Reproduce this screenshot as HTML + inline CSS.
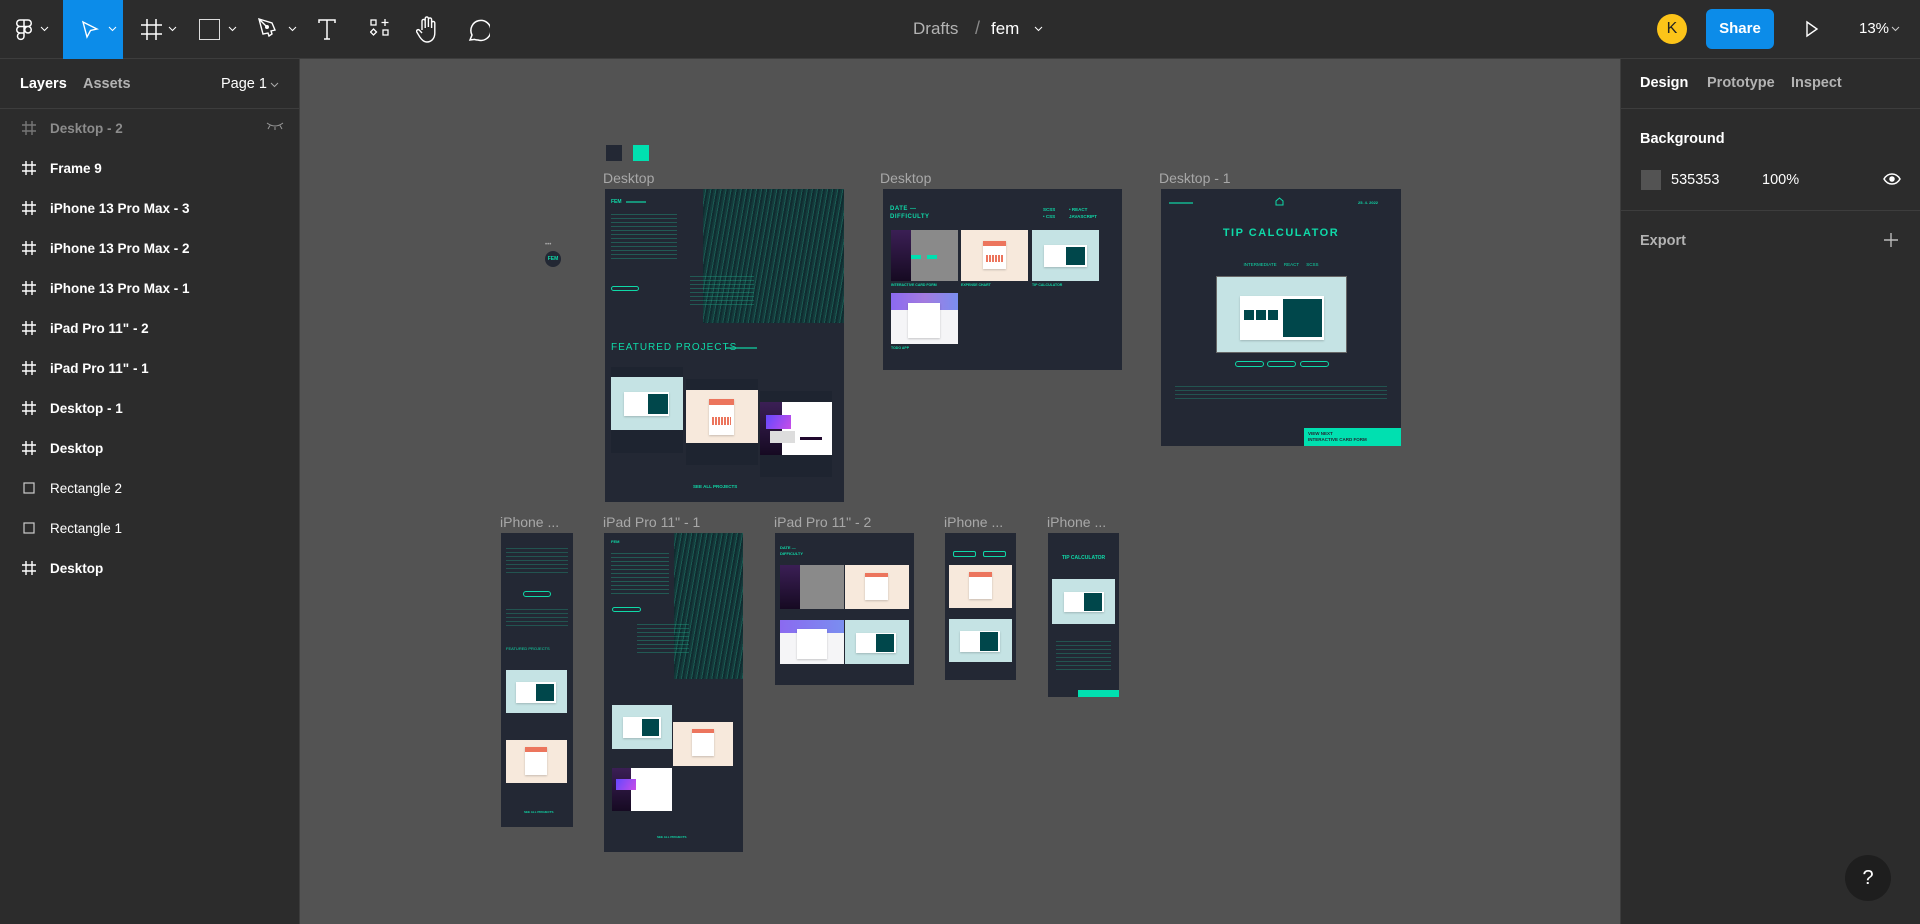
<!DOCTYPE html>
<html><head><meta charset="utf-8"><style>
*{margin:0;padding:0;box-sizing:border-box}
body{width:1920px;height:924px;overflow:hidden;background:#535353;font-family:"Liberation Sans",sans-serif;position:relative}
.a{position:absolute}
#top{left:0;top:0;width:1920px;height:59px;background:#2c2c2c;border-bottom:1px solid #3d3d3d}
#left{left:0;top:59px;width:300px;height:865px;background:#2c2c2c;border-right:1px solid #3d3d3d}
#right{left:1620px;top:59px;width:300px;height:865px;background:#2c2c2c;border-left:1px solid #3d3d3d}
.row{position:absolute;left:0;width:300px;height:40px;font-size:13.5px;font-weight:bold;color:#fff}
.row span{position:absolute;left:50px;top:12px}
.row svg{position:absolute;left:22px;top:12px}
.lbl{position:absolute;color:#a8a8a8;font-size:14px}
.fr{position:absolute;background:#232834;overflow:hidden}
.t{position:absolute;color:#0fd9a8;font-weight:bold;white-space:nowrap}
.ln{position:absolute;height:1.5px;background:#0fd9a8;opacity:.6}
.tx{position:absolute;background:repeating-linear-gradient(#1fa585 0 1px,transparent 1px 4px);opacity:.4}
.tex{position:absolute;background:repeating-linear-gradient(100deg,#143a3b 0 2px,#1a5a52 2px 3px,#102c30 3px 5px)}
.lb{background:#c5e3e4}.pe{background:#f7e9dc}
.card{position:absolute;background:#fff;box-shadow:0 1px 2px rgba(0,0,0,.2)}
</style></head><body>
<div id="top" class="a">
 <svg class="a" style="left:16px;top:19px" width="16" height="22" viewBox="0 0 16 22" fill="none" stroke="#fff" stroke-width="1.5"><path d="M4 1h4v6.5H4a3.25 3.25 0 010-6.5zM8 1h4a3.25 3.25 0 010 6.5H8zM4 7.5h4V14H4a3.25 3.25 0 010-6.5zM12 7.5a3.25 3.25 0 110 6.5 3.25 3.25 0 010-6.5zM4 14h4v3.3A3.25 3.25 0 114 14z"/></svg>
 <svg class="a" style="left:40px;top:26px" width="9" height="6" viewBox="0 0 9 6" fill="none" stroke="#fff"><path d="M1 1l3.5 3.5L8 1"/></svg>
 <div class="a" style="left:63px;top:0;width:60px;height:59px;background:#0c8ce9"></div>
 <svg class="a" style="left:81px;top:20px" width="18" height="19" viewBox="0 0 18 19" fill="none" stroke="#fff" stroke-width="1.4"><path d="M2 2l14 7-6.5 1.5L6 17z"/></svg>
 <svg class="a" style="left:108px;top:26px" width="9" height="6" viewBox="0 0 9 6" fill="none" stroke="#fff"><path d="M1 1l3.5 3.5L8 1"/></svg>
 <svg class="a" style="left:141px;top:19px" width="21" height="21" viewBox="0 0 21 21" fill="none" stroke="#fff" stroke-width="1.5"><path d="M6 0v21M15 0v21M0 6h21M0 15h21"/></svg>
 <svg class="a" style="left:168px;top:26px" width="9" height="6" viewBox="0 0 9 6" fill="none" stroke="#fff"><path d="M1 1l3.5 3.5L8 1"/></svg>
 <div class="a" style="left:199px;top:19px;width:21px;height:21px;border:1.5px solid #ddd"></div>
 <svg class="a" style="left:228px;top:26px" width="9" height="6" viewBox="0 0 9 6" fill="none" stroke="#fff"><path d="M1 1l3.5 3.5L8 1"/></svg>
 <svg class="a" style="left:258px;top:18px" width="22" height="22" viewBox="0 0 22 22" fill="none" stroke="#fff" stroke-width="1.4"><path d="M1 1l13 4 3 7-4 1 1 3-3 2-1-3-5 1zM1 1l7 7"/><circle cx="9" cy="9" r="1.3" fill="#fff"/></svg>
 <svg class="a" style="left:288px;top:26px" width="9" height="6" viewBox="0 0 9 6" fill="none" stroke="#fff"><path d="M1 1l3.5 3.5L8 1"/></svg>
 <svg class="a" style="left:318px;top:19px" width="18" height="21" viewBox="0 0 18 21" fill="none" stroke="#fff" stroke-width="1.5"><path d="M1 4V1h16v3M9 1v19M6 20h6"/></svg>
 <svg class="a" style="left:370px;top:19px" width="19" height="19" viewBox="0 0 19 19" fill="none" stroke="#fff" stroke-width="1.3"><rect x="1" y="1" width="5" height="5"/><path d="M15 0v7M11.5 3.5h7M3.5 10l3 3-3 3-3-3z"/><rect x="13" y="11" width="5" height="5"/></svg>
 <svg class="a" style="left:416px;top:16px" width="23" height="27" viewBox="0 0 23 27" fill="none" stroke="#fff" stroke-width="1.4"><path d="M6 14V5a1.6 1.6 0 013.2 0v7M9.2 11V2.5a1.6 1.6 0 013.2 0V11M12.4 11V3.5a1.6 1.6 0 013.2 0V12M15.6 12V7a1.6 1.6 0 013.2 0v10c0 5-3 9-8 9-3 0-5-2-7-5l-3-5a1.6 1.6 0 012.7-1.7L6 17"/></svg>
 <svg class="a" style="left:466px;top:18px" width="24" height="24" viewBox="0 0 24 24" fill="none" stroke="#fff" stroke-width="1.5"><path d="M4 22l2-5A10 10 0 1112 22a10 10 0 01-3.5-.6z"/></svg>
 <div class="a" style="left:913px;top:19px;font-size:17px;color:#b3b3b3">Drafts</div>
 <div class="a" style="left:975px;top:18px;font-size:18px;color:#8a8a8a">/</div>
 <div class="a" style="left:991px;top:19px;font-size:17px;color:#fff">fem</div>
 <svg class="a" style="left:1034px;top:26px" width="9" height="6" viewBox="0 0 9 6" fill="none" stroke="#fff"><path d="M1 1l3.5 3.5L8 1"/></svg>
 <div class="a" style="left:1657px;top:14px;width:30px;height:30px;border-radius:50%;background:#fcc419;color:#222;font-size:16px;text-align:center;line-height:30px">K</div>
 <div class="a" style="left:1706px;top:9px;width:68px;height:40px;border-radius:6px;background:#0c8ce9;color:#fff;font-weight:bold;font-size:15px;text-align:center;line-height:40px">Share</div>
 <svg class="a" style="left:1805px;top:20px" width="14" height="18" viewBox="0 0 14 18" fill="none" stroke="#fff" stroke-width="1.4"><path d="M2 2l10 7-10 7z"/></svg>
 <div class="a" style="left:1859px;top:20px;font-size:15px;color:#fff">13%</div>
 <svg class="a" style="left:1891px;top:26px" width="9" height="6" viewBox="0 0 9 6" fill="none" stroke="#ccc"><path d="M1 1l3.5 3.5L8 1"/></svg>
</div>

<div id="left" class="a">
 <div class="a" style="left:20px;top:17px;font-size:14.5px;font-weight:bold;color:#fff">Layers</div>
 <div class="a" style="left:83px;top:17px;font-size:14.5px;font-weight:bold;color:#b3b3b3">Assets</div>
 <div class="a" style="left:221px;top:17px;font-size:14.5px;color:#fff">Page 1</div>
 <svg class="a" style="left:270px;top:23px" width="9" height="6" viewBox="0 0 9 6" fill="none" stroke="#aaa"><path d="M1 1l3.5 3.5L8 1"/></svg>
 <div class="a" style="left:0;top:49px;width:300px;height:1px;background:#3d3d3d"></div>
</div>
<div id="right" class="a">
 <div class="a" style="left:19px;top:16px;font-size:14.5px;font-weight:bold;color:#fff">Design</div>
 <div class="a" style="left:86px;top:16px;font-size:14.5px;font-weight:bold;color:#b3b3b3">Prototype</div>
 <div class="a" style="left:170px;top:16px;font-size:14.5px;font-weight:bold;color:#b3b3b3">Inspect</div>
 <div class="a" style="left:0;top:49px;width:300px;height:1px;background:#3d3d3d"></div>
 <div class="a" style="left:19px;top:72px;font-size:14.5px;font-weight:bold;color:#fff">Background</div>
 <div class="a" style="left:20px;top:111px;width:20px;height:20px;background:#535353"></div>
 <div class="a" style="left:50px;top:113px;font-size:14.5px;color:#fff">535353</div>
 <div class="a" style="left:141px;top:113px;font-size:14.5px;color:#fff">100%</div>
 <svg class="a" style="left:262px;top:113px" width="18" height="14" viewBox="0 0 18 14" fill="none" stroke="#fff" stroke-width="1.5"><path d="M1 7c2-3.5 5-5 8-5s6 1.5 8 5c-2 3.5-5 5-8 5s-6-1.5-8-5z"/><circle cx="9" cy="7" r="2" fill="#fff"/></svg>
 <div class="a" style="left:0;top:151px;width:300px;height:1px;background:#3d3d3d"></div>
 <div class="a" style="left:19px;top:174px;font-size:14.5px;font-weight:bold;color:#b3b3b3">Export</div>
 <svg class="a" style="left:262px;top:173px" width="16" height="16" viewBox="0 0 16 16" stroke="#bbb" stroke-width="1.4"><path d="M8 1v14M1 8h14"/></svg>
 <div class="a" style="left:224px;top:796px;width:46px;height:46px;border-radius:50%;background:#1e1e1e;color:#fff;font-size:20px;text-align:center;line-height:46px">?</div>
</div>

<div class="a" style="top:109px;left:0">
<div class="row" style="top:0;color:#8c8c8c"><svg width="14" height="14" viewBox="0 0 14 14" stroke="#777" stroke-width="1.4"><path d="M4 0v14M10 0v14M0 4h14M0 10h14"/></svg><span>Desktop - 2</span><svg style="left:266px;top:13px" width="18" height="8" viewBox="0 0 18 8" fill="none" stroke="#999"><path d="M1 1q8 6 16 0M4 3.5L2 7M9 5v3M14 3.5l2 3.5"/></svg></div>
<div class="row" style="top:40px"><svg width="14" height="14" viewBox="0 0 14 14" stroke="#fff" stroke-width="1.4"><path d="M4 0v14M10 0v14M0 4h14M0 10h14"/></svg><span>Frame 9</span></div>
<div class="row" style="top:80px"><svg width="14" height="14" viewBox="0 0 14 14" stroke="#fff" stroke-width="1.4"><path d="M4 0v14M10 0v14M0 4h14M0 10h14"/></svg><span>iPhone 13 Pro Max - 3</span></div>
<div class="row" style="top:120px"><svg width="14" height="14" viewBox="0 0 14 14" stroke="#fff" stroke-width="1.4"><path d="M4 0v14M10 0v14M0 4h14M0 10h14"/></svg><span>iPhone 13 Pro Max - 2</span></div>
<div class="row" style="top:160px"><svg width="14" height="14" viewBox="0 0 14 14" stroke="#fff" stroke-width="1.4"><path d="M4 0v14M10 0v14M0 4h14M0 10h14"/></svg><span>iPhone 13 Pro Max - 1</span></div>
<div class="row" style="top:200px"><svg width="14" height="14" viewBox="0 0 14 14" stroke="#fff" stroke-width="1.4"><path d="M4 0v14M10 0v14M0 4h14M0 10h14"/></svg><span>iPad Pro 11" - 2</span></div>
<div class="row" style="top:240px"><svg width="14" height="14" viewBox="0 0 14 14" stroke="#fff" stroke-width="1.4"><path d="M4 0v14M10 0v14M0 4h14M0 10h14"/></svg><span>iPad Pro 11" - 1</span></div>
<div class="row" style="top:280px"><svg width="14" height="14" viewBox="0 0 14 14" stroke="#fff" stroke-width="1.4"><path d="M4 0v14M10 0v14M0 4h14M0 10h14"/></svg><span>Desktop - 1</span></div>
<div class="row" style="top:320px"><svg width="14" height="14" viewBox="0 0 14 14" stroke="#fff" stroke-width="1.4"><path d="M4 0v14M10 0v14M0 4h14M0 10h14"/></svg><span>Desktop</span></div>
<div class="row" style="top:360px;font-weight:normal"><svg width="14" height="14" viewBox="0 0 14 14" fill="none" stroke="#ccc" stroke-width="1.2"><rect x="2" y="2" width="10" height="10"/></svg><span>Rectangle 2</span></div>
<div class="row" style="top:400px;font-weight:normal"><svg width="14" height="14" viewBox="0 0 14 14" fill="none" stroke="#ccc" stroke-width="1.2"><rect x="2" y="2" width="10" height="10"/></svg><span>Rectangle 1</span></div>
<div class="row" style="top:440px"><svg width="14" height="14" viewBox="0 0 14 14" stroke="#fff" stroke-width="1.4"><path d="M4 0v14M10 0v14M0 4h14M0 10h14"/></svg><span>Desktop</span></div>
</div>

<div class="a" style="left:606px;top:145px;width:16px;height:16px;background:#232834"></div>
<div class="a" style="left:633px;top:145px;width:16px;height:16px;background:#00e0b0"></div>
<div class="a" style="left:545px;top:242px;color:#aaa;font-size:6px">•••</div>
<div class="a" style="left:545px;top:251px;width:16px;height:16px;border-radius:50%;background:#232834;color:#0fd9a8;font-size:5px;font-weight:bold;text-align:center;line-height:16px">FEM</div>

<div class="lbl" style="left:603px;top:170px">Desktop</div>
<div class="fr" style="left:605px;top:189px;width:239px;height:313px">
 <div class="tex" style="left:78px;top:0;width:161px;height:134px"></div>
 <div class="a" style="left:0;top:0;width:98px;height:134px;background:#232834"></div>
 <div class="t" style="left:6px;top:10px;font-size:5px">FEM</div><div class="ln" style="left:21px;top:12px;width:20px"></div>
 <div class="tx" style="left:6px;top:25px;width:66px;height:48px"></div>
 <div class="a" style="left:6px;top:97px;width:28px;height:5px;border:1px solid #0fd9a8;border-radius:3px"></div>
 <div class="tx" style="left:85px;top:87px;width:64px;height:30px"></div>
 <div class="t" style="left:6px;top:153px;font-size:10px;letter-spacing:1px;font-weight:normal">FEATURED PROJECTS</div>
 <div class="ln" style="left:120px;top:158px;width:32px"></div>
 <div class="a" style="left:6px;top:178px;width:72px;height:86px;background:#1e2430"></div>
 <div class="a lb" style="left:6px;top:188px;width:72px;height:53px"><div class="card" style="left:13px;top:15px;width:45px;height:24px"><div class="a" style="left:24px;top:2px;width:20px;height:20px;background:#00474b"></div></div></div>
 <div class="a" style="left:81px;top:190px;width:72px;height:86px;background:#1e2430"></div>
 <div class="a pe" style="left:81px;top:201px;width:72px;height:53px"><div class="card" style="left:23px;top:9px;width:25px;height:36px"><div class="a" style="left:0;top:0;width:25px;height:6px;background:#ec755d"></div><div class="a" style="left:3px;top:18px;width:19px;height:8px;background:repeating-linear-gradient(90deg,#ec755d 0 2px,transparent 2px 3px)"></div></div></div>
 <div class="a" style="left:155px;top:202px;width:72px;height:86px;background:#1e2430"></div>
 <div class="a" style="left:155px;top:213px;width:72px;height:53px;background:#fff"><div class="a" style="left:0;top:0;width:22px;height:53px;background:linear-gradient(#3b1f55,#160a22)"></div><div class="a" style="left:6px;top:13px;width:25px;height:14px;background:linear-gradient(120deg,#6448fe,#c84de8)"></div><div class="a" style="left:10px;top:29px;width:25px;height:12px;background:#ddd"></div><div class="a" style="left:40px;top:35px;width:22px;height:3px;background:#21092f"></div></div>
 <div class="t" style="left:88px;top:295px;font-size:4.5px">SEE ALL PROJECTS</div>
</div>

<div class="lbl" style="left:880px;top:170px">Desktop</div>
<div class="fr" style="left:883px;top:189px;width:239px;height:181px">
 <div class="t" style="left:7px;top:16px;font-size:6px;line-height:8px;letter-spacing:.5px">DATE —<br>DIFFICULTY</div>
 <div class="t" style="left:160px;top:17px;font-size:4.5px;line-height:7px">SCSS<br>• CSS</div>
 <div class="t" style="left:186px;top:17px;font-size:4.5px;line-height:7px">• REACT<br>JAVASCRIPT</div>
 <div class="a" style="left:8px;top:41px;width:67px;height:51px;background:#8a8a8a"><div class="a" style="left:0;top:0;width:20px;height:51px;background:linear-gradient(#3b1f55,#160a22)"></div><div class="a" style="left:20px;top:25px;width:10px;height:4px;background:#00e0b0"></div><div class="a" style="left:36px;top:25px;width:10px;height:4px;background:#00e0b0"></div></div>
 <div class="a pe" style="left:78px;top:41px;width:67px;height:51px"><div class="card" style="left:22px;top:11px;width:23px;height:28px"><div class="a" style="width:23px;height:5px;background:#ec755d"></div><div class="a" style="left:3px;top:14px;width:17px;height:7px;background:repeating-linear-gradient(90deg,#ec755d 0 2px,transparent 2px 3px)"></div></div></div>
 <div class="a lb" style="left:149px;top:41px;width:67px;height:51px"><div class="card" style="left:12px;top:15px;width:43px;height:22px"><div class="a" style="left:22px;top:2px;width:19px;height:18px;background:#00474b"></div></div></div>
 <div class="t" style="left:8px;top:94px;font-size:3.5px">INTERACTIVE CARD FORM</div>
 <div class="t" style="left:78px;top:94px;font-size:3.5px">EXPENSE CHART</div>
 <div class="t" style="left:149px;top:94px;font-size:3.5px">TIP CALCULATOR</div>
 <div class="a" style="left:8px;top:104px;width:67px;height:51px;background:#f5f5f7"><div class="a" style="width:67px;height:17px;background:linear-gradient(90deg,#8b6af0,#a37be0,#7a8ef0)"></div><div class="card" style="left:17px;top:10px;width:32px;height:35px"></div></div>
 <div class="t" style="left:8px;top:157px;font-size:3.5px">TODO APP</div>
</div>

<div class="lbl" style="left:1159px;top:170px">Desktop - 1</div>
<div class="fr" style="left:1161px;top:189px;width:240px;height:257px">
 <div class="t" style="left:197px;top:11px;font-size:4px">25. 4. 2022</div>
 <div class="ln" style="left:8px;top:13px;width:24px"></div>
 <svg class="a" style="left:114px;top:8px" width="9" height="9" viewBox="0 0 9 9" fill="none" stroke="#0fd9a8"><path d="M1 8V4l3.5-3L8 4v4z"/></svg>
 <div class="t" style="left:0;width:240px;text-align:center;top:38px;font-size:11px;letter-spacing:1.5px">TIP CALCULATOR</div>
 <div class="t" style="left:0;width:240px;text-align:center;top:73px;font-size:4.5px;word-spacing:6px;font-weight:normal">INTERMEDIATE REACT SCSS</div>
 <div class="a lb" style="left:55px;top:87px;width:131px;height:77px;border:1px solid #666"><div class="card" style="left:23px;top:19px;width:84px;height:44px"><div class="a" style="left:43px;top:3px;width:39px;height:38px;background:#00474b"></div><div class="a" style="left:4px;top:14px;width:36px;height:10px;background:repeating-linear-gradient(90deg,#00474b 0 10px,#fff 10px 12px)"></div></div></div>
 <div class="a" style="left:74px;top:172px;width:29px;height:6px;border:1px solid #0fd9a8;border-radius:3px"></div>
 <div class="a" style="left:106px;top:172px;width:29px;height:6px;border:1px solid #0fd9a8;border-radius:3px"></div>
 <div class="a" style="left:139px;top:172px;width:29px;height:6px;border:1px solid #0fd9a8;border-radius:3px"></div>
 <div class="tx" style="left:14px;top:197px;width:212px;height:15px;opacity:.35"></div>
 <div class="a" style="left:143px;top:239px;width:97px;height:18px;background:#00e0b0"><div class="a" style="left:4px;top:3px;font-size:4.5px;font-weight:bold;color:#232834;line-height:6px">VIEW NEXT<br>INTERACTIVE CARD FORM</div></div>
</div>

<div class="lbl" style="left:500px;top:514px">iPhone ...</div>
<div class="fr" style="left:501px;top:533px;width:72px;height:294px">
 <div class="tx" style="left:5px;top:15px;width:62px;height:28px;opacity:.35"></div>
 <div class="a" style="left:22px;top:58px;width:28px;height:6px;border:1px solid #0fd9a8;border-radius:3px"></div>
 <div class="tx" style="left:5px;top:76px;width:62px;height:18px;opacity:.35"></div>
 <div class="t" style="left:5px;top:113px;font-size:4px;font-weight:normal">FEATURED PROJECTS</div>
 <div class="a lb" style="left:5px;top:137px;width:61px;height:43px"><div class="card" style="left:10px;top:12px;width:40px;height:21px"><div class="a" style="left:20px;top:2px;width:18px;height:17px;background:#00474b"></div></div></div>
 <div class="a pe" style="left:5px;top:207px;width:61px;height:43px"><div class="card" style="left:19px;top:7px;width:22px;height:28px"><div class="a" style="width:22px;height:5px;background:#ec755d"></div></div></div>
 <div class="t" style="left:23px;top:277px;font-size:3px">SEE ALL PROJECTS</div>
</div>

<div class="lbl" style="left:603px;top:514px">iPad Pro 11" - 1</div>
<div class="fr" style="left:604px;top:533px;width:139px;height:319px">
 <div class="tex" style="left:70px;top:0;width:69px;height:146px"></div>
 <div class="t" style="left:7px;top:6px;font-size:4px">FEM</div>
 <div class="tx" style="left:7px;top:20px;width:58px;height:42px"></div>
 <div class="a" style="left:8px;top:74px;width:29px;height:5px;border:1px solid #0fd9a8;border-radius:3px"></div>
 <div class="tx" style="left:33px;top:91px;width:52px;height:30px"></div>
 <div class="a lb" style="left:8px;top:172px;width:60px;height:44px"><div class="card" style="left:11px;top:12px;width:38px;height:21px"><div class="a" style="left:19px;top:2px;width:17px;height:17px;background:#00474b"></div></div></div>
 <div class="a pe" style="left:69px;top:189px;width:60px;height:44px"><div class="card" style="left:19px;top:7px;width:22px;height:27px"><div class="a" style="width:22px;height:4px;background:#ec755d"></div></div></div>
 <div class="a" style="left:8px;top:235px;width:60px;height:43px;background:#fff"><div class="a" style="width:19px;height:43px;background:linear-gradient(#3b1f55,#160a22)"></div><div class="a" style="left:4px;top:11px;width:20px;height:11px;background:linear-gradient(120deg,#6448fe,#c84de8)"></div></div>
 <div class="t" style="left:53px;top:302px;font-size:3px">SEE ALL PROJECTS</div>
</div>

<div class="lbl" style="left:774px;top:514px">iPad Pro 11" - 2</div>
<div class="fr" style="left:775px;top:533px;width:139px;height:152px">
 <div class="t" style="left:5px;top:12px;font-size:4px;line-height:6px">DATE —<br>DIFFICULTY</div>
 <div class="a" style="left:5px;top:32px;width:64px;height:44px;background:#8a8a8a"><div class="a" style="width:20px;height:44px;background:linear-gradient(#3b1f55,#160a22)"></div></div>
 <div class="a pe" style="left:70px;top:32px;width:64px;height:44px"><div class="card" style="left:20px;top:8px;width:23px;height:27px"><div class="a" style="width:23px;height:4px;background:#ec755d"></div></div></div>
 <div class="a" style="left:5px;top:87px;width:64px;height:44px;background:#f5f5f7"><div class="a" style="width:64px;height:13px;background:linear-gradient(90deg,#8b6af0,#7a8ef0)"></div><div class="card" style="left:17px;top:9px;width:30px;height:30px"></div></div>
 <div class="a lb" style="left:70px;top:87px;width:64px;height:44px"><div class="card" style="left:11px;top:13px;width:40px;height:20px"><div class="a" style="left:20px;top:1px;width:18px;height:18px;background:#00474b"></div></div></div>
</div>

<div class="lbl" style="left:944px;top:514px">iPhone ...</div>
<div class="fr" style="left:945px;top:533px;width:71px;height:147px">
 <div class="a" style="left:8px;top:18px;width:23px;height:6px;border:1px solid #0fd9a8;border-radius:2px"></div>
 <div class="a" style="left:38px;top:18px;width:23px;height:6px;border:1px solid #0fd9a8;border-radius:2px"></div>
 <div class="a pe" style="left:4px;top:32px;width:63px;height:43px"><div class="card" style="left:20px;top:7px;width:23px;height:27px"><div class="a" style="width:23px;height:5px;background:#ec755d"></div></div></div>
 <div class="a lb" style="left:4px;top:86px;width:63px;height:43px"><div class="card" style="left:11px;top:12px;width:40px;height:21px"><div class="a" style="left:20px;top:1px;width:18px;height:19px;background:#00474b"></div></div></div>
</div>

<div class="lbl" style="left:1047px;top:514px">iPhone ...</div>
<div class="fr" style="left:1048px;top:533px;width:71px;height:164px">
 <div class="t" style="left:0;width:71px;text-align:center;top:22px;font-size:5px">TIP CALCULATOR</div>
 <div class="a lb" style="left:4px;top:46px;width:63px;height:45px"><div class="card" style="left:12px;top:13px;width:40px;height:20px"><div class="a" style="left:20px;top:1px;width:18px;height:18px;background:#00474b"></div></div></div>
 <div class="tx" style="left:8px;top:108px;width:55px;height:30px;opacity:.35"></div>
 <div class="a" style="left:30px;top:157px;width:41px;height:7px;background:#00e0b0"></div>
</div>
</body></html>
